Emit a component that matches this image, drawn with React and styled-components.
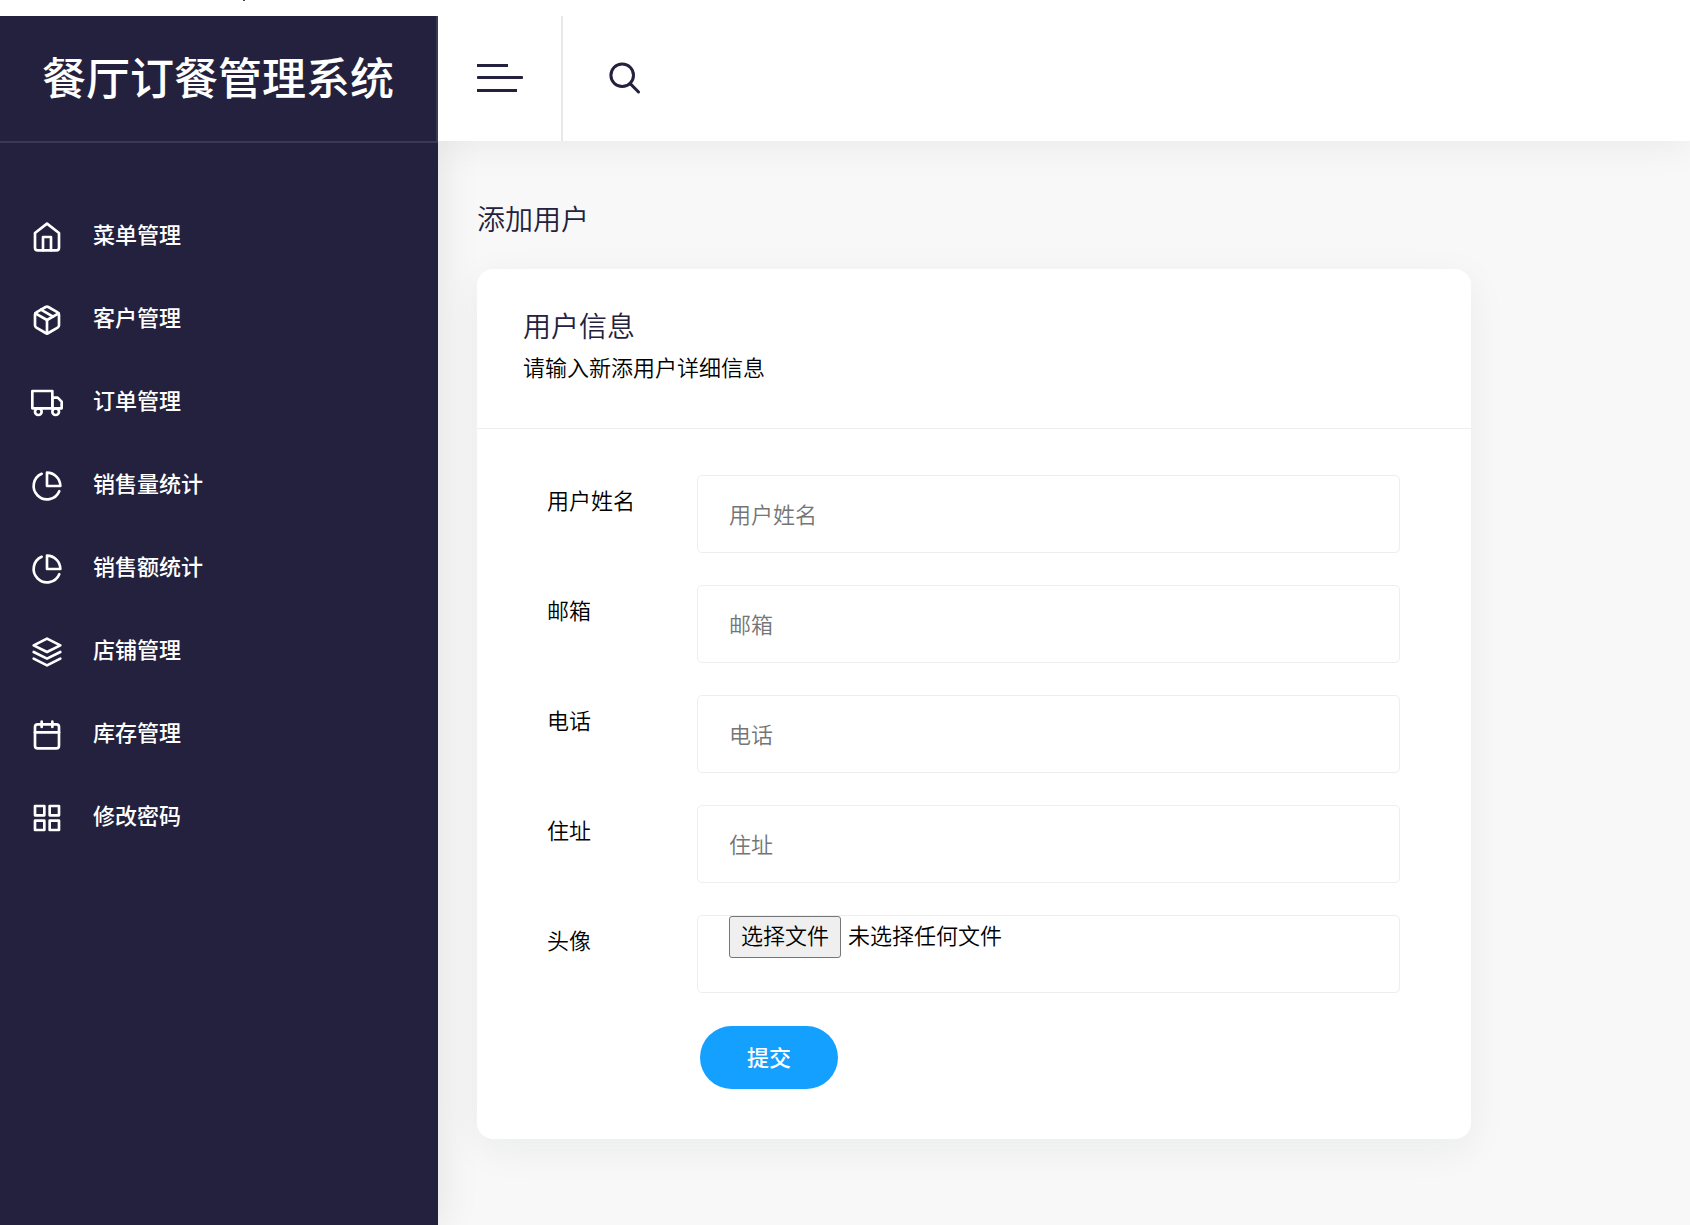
import React, { useRef, useState } from 'react';
import styled, { createGlobalStyle } from 'styled-components';
import { FiHome, FiPackage, FiTruck, FiPieChart, FiLayers, FiCalendar, FiGrid } from 'react-icons/fi';

const GlobalStyle = createGlobalStyle`
  * {
    box-sizing: border-box;
  }

  body {
    margin: 0;
    background: #ffffff;
    color: #000000;
    font-family: "Noto Sans CJK SC", sans-serif;
    font-size: 22px;
    font-weight: 350;
    line-height: 32px;
  }

  button,
  input {
    font-family: inherit;
    font-size: inherit;
    font-weight: inherit;
  }
`;

const Page = styled.div`
  min-height: 100vh;
  display: flex;
  flex-direction: column;
`;

const TopStrip = styled.div`
  height: 16px;
  padding-left: 243px;

  &::before {
    content: '';
    display: block;
    width: 2px;
    height: 1px;
    background: #4a3f55;
  }
`;

const Layout = styled.div`
  flex: 1;
  display: grid;
  grid-template-columns: 438px 1fr;
`;

const Sidebar = styled.aside`
  background: #23213d;
  box-shadow: 0 0 40px rgba(0, 0, 0, 0.1);
  clip-path: inset(0 -60px 0 0);
  z-index: 1;
`;

const Brand = styled.h1`
  height: 127px;
  margin: 0;
  padding-bottom: 6px;
  display: flex;
  align-items: center;
  justify-content: center;
  border-right: 2px solid #3a3852;
  border-bottom: 2px solid #3a3852;
  color: #ffffff;
  font-size: 44px;
  font-weight: 500;
  line-height: 64px;
`;

const Menu = styled.nav`
  padding-top: 52px;
  display: flex;
  flex-direction: column;
`;

const MenuLink = styled.a`
  height: 83px;
  padding-left: 31px;
  display: flex;
  align-items: center;
  gap: 30px;
  color: #ffffff;
  font-weight: 500;
  text-decoration: none;

  svg {
    width: 32px;
    height: 32px;
  }
`;

const MenuLabel = styled.span`
  padding-bottom: 8px;
`;

const Content = styled.div`
  display: flex;
  flex-direction: column;
  background: #f8f8f8;
`;

const Header = styled.header`
  height: 125px;
  display: flex;
  background: #ffffff;
  box-shadow: 0 0 40px rgba(0, 0, 0, 0.08);
  clip-path: inset(0 0 -60px 0);
  position: relative;
  z-index: 2;
`;

const IconButton = styled.button`
  padding: 0 38px 2px 39px;
  display: flex;
  align-items: center;
  border: 0;
  border-right: ${({ $divided }) => ($divided ? '2px solid #e8e8ea' : '0')};
  background: none;
  color: #23213d;
  cursor: pointer;
`;

const SearchButton = styled(IconButton)`
  padding: 0 46px 2px;
`;

const Main = styled.main`
  padding: 57px 219px 86px 39px;
`;

const PageTitle = styled.h2`
  margin: 0 0 31px;
  color: #23213d;
  font-size: 28px;
  font-weight: 350;
  line-height: 40px;
`;

const Card = styled.section`
  background: #ffffff;
  border-radius: 16px;
  box-shadow: 0 10px 40px rgba(10, 40, 30, 0.06);
`;

const CardHeader = styled.div`
  height: 160px;
  padding: 36px 46px 0;
  border-bottom: 1px solid #eeeeee;
`;

const CardTitle = styled.h3`
  margin: 0;
  color: #23213d;
  font-size: 28px;
  font-weight: 350;
  line-height: 40px;
`;

const CardText = styled.p`
  margin: 5px 0 0;
`;

const Form = styled.form`
  padding: 46px 71px 50px 70px;
`;

const Fields = styled.div`
  display: flex;
  flex-direction: column;
  gap: 32px;
`;

const Field = styled.div`
  display: grid;
  grid-template-columns: 150px 1fr;
`;

const FieldLabel = styled.label`
  padding-top: 8px;
`;

const TextInput = styled.input`
  width: 100%;
  height: 78px;
  padding: 0 31px 3px;
  border: 1px solid #eeeeee;
  border-radius: 5px;
  background: #ffffff;
  color: #000000;
  outline: none;

  &::placeholder {
    color: #757575;
    opacity: 1;
  }
`;

const FileBox = styled.div`
  height: 78px;
  padding: 0 31px;
  display: flex;
  align-items: flex-start;
  gap: 7px;
  border: 1px solid #eeeeee;
  border-radius: 5px;
  line-height: 36px;

  input {
    display: none;
  }
`;

const FileButton = styled.button`
  height: 42px;
  padding: 0 11px 6px;
  border: 1px solid #767676;
  border-radius: 3px;
  background: #efefef;
  color: #000000;
  line-height: 32px;
`;

const SubmitButton = styled.button`
  width: 138px;
  height: 63px;
  margin: 33px 0 0 153px;
  padding: 0 0 4px;
  display: block;
  border: 0;
  border-radius: 32px;
  background: #13a0ff;
  color: #ffffff;
  font-weight: 500;
  cursor: pointer;
`;

const menuItems = [
  { label: '菜单管理', Icon: FiHome },
  { label: '客户管理', Icon: FiPackage },
  { label: '订单管理', Icon: FiTruck },
  { label: '销售量统计', Icon: FiPieChart },
  { label: '销售额统计', Icon: FiPieChart },
  { label: '店铺管理', Icon: FiLayers },
  { label: '库存管理', Icon: FiCalendar },
  { label: '修改密码', Icon: FiGrid },
];

const textFields = [
  { id: 'name', label: '用户姓名', type: 'text' },
  { id: 'email', label: '邮箱', type: 'email' },
  { id: 'phone', label: '电话', type: 'tel' },
  { id: 'address', label: '住址', type: 'text' },
];

const MenuIcon = () => (
  <svg width="46" height="30" viewBox="0 0 46 30" fill="currentColor">
    <rect x="0" y="1" width="31" height="3" />
    <rect x="0" y="13" width="46" height="3" rx="1" />
    <rect x="0" y="26" width="40" height="3" />
  </svg>
);

const SearchIcon = () => (
  <svg width="32" height="32" viewBox="0 0 32 32" fill="none" stroke="currentColor" strokeWidth="3" strokeLinecap="round">
    <circle cx="13.2" cy="13.2" r="11.3" />
    <path d="M21 21.4L29.5 30" />
  </svg>
);

const FilePicker = ({ id }) => {
  const inputRef = useRef(null);
  const [fileName, setFileName] = useState('');

  return (
    <FileBox>
      <input
        ref={inputRef}
        id={id}
        type="file"
        onChange={(e) => setFileName(e.target.files[0] ? e.target.files[0].name : '')}
      />
      <FileButton type="button" onClick={() => inputRef.current.click()}>选择文件</FileButton>
      <span>{fileName || '未选择任何文件'}</span>
    </FileBox>
  );
};

export default function App() {
  return (
    <>
      <GlobalStyle />
      <Page>
        <TopStrip />
        <Layout>
          <Sidebar>
            <Brand>餐厅订餐管理系统</Brand>
            <Menu>
              {menuItems.map(({ label, Icon }) => (
                <MenuLink key={label} href="#">
                  <Icon />
                  <MenuLabel>{label}</MenuLabel>
                </MenuLink>
              ))}
            </Menu>
          </Sidebar>

          <Content>
            <Header>
              <IconButton type="button" $divided aria-label="菜单"><MenuIcon /></IconButton>
              <SearchButton type="button" aria-label="搜索"><SearchIcon /></SearchButton>
            </Header>

            <Main>
              <PageTitle>添加用户</PageTitle>
              <Card>
                <CardHeader>
                  <CardTitle>用户信息</CardTitle>
                  <CardText>请输入新添用户详细信息</CardText>
                </CardHeader>
                <Form onSubmit={(e) => e.preventDefault()}>
                  <Fields>
                    {textFields.map(({ id, label, type }) => (
                      <Field key={id}>
                        <FieldLabel htmlFor={id}>{label}</FieldLabel>
                        <TextInput id={id} type={type} placeholder={label} />
                      </Field>
                    ))}
                    <Field>
                      <FieldLabel htmlFor="avatar">头像</FieldLabel>
                      <FilePicker id="avatar" />
                    </Field>
                  </Fields>
                  <SubmitButton type="submit">提交</SubmitButton>
                </Form>
              </Card>
            </Main>
          </Content>
        </Layout>
      </Page>
    </>
  );
}
